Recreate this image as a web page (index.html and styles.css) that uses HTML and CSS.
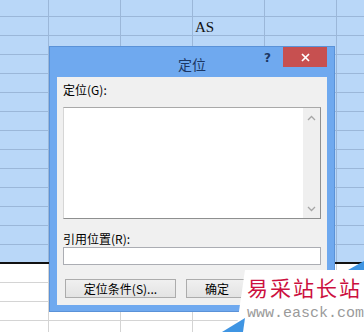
FILE: index.html
```html
<!DOCTYPE html>
<html lang="zh-CN">
  <head>
    <meta charset="UTF-8" />
    <meta name="viewport" content="width=device-width, initial-scale=1.0" />
    <title>定位</title>
    <link rel="stylesheet" href="styles.css">
  </head>
  <body>
    <div class="sheet">
      <div class="sheet-top">
        <div class="cell-row"><span class="cell-text">AS</span></div>
      </div>
      <div class="sheet-bottom"></div>

      <div class="dialog">
        <div class="titlebar">
          <span></span>
          <span class="title">定位</span>
          <div class="title-tools">
            <span class="help">?</span>
            <span class="close">
              <svg width="9" height="9" viewBox="0 0 9 9">
                <path d="M1 1L8 8M8 1L1 8" stroke="#fff" stroke-width="1.7" />
              </svg>
            </span>
          </div>
        </div>

        <div class="client">
          <div class="label">定位(<u>G</u>):</div>
          <div class="listbox">
            <div class="list-area"></div>
            <div class="scroll">
              <svg width="9" height="6" viewBox="0 0 9 6">
                <polyline points="1,5 4.5,1.5 8,5" fill="none" stroke="#a6a6a6" stroke-width="1.3" />
              </svg>
              <svg width="9" height="6" viewBox="0 0 9 6">
                <polyline points="1,1 4.5,4.5 8,1" fill="none" stroke="#a6a6a6" stroke-width="1.3" />
              </svg>
            </div>
          </div>
          <div class="label label-ref">引用位置(<u>R</u>):</div>
          <div class="textbox"></div>
          <div class="buttons">
            <button class="btn btn-wide">定位条件(<u>S</u>)...</button>
            <button class="btn">确定</button>
          </div>
        </div>
      </div>

      <div class="watermark">
        <svg class="watermark-bg" width="144" height="77" viewBox="0 0 144 77">
          <polygon points="25,15 144,15 144,77 16,77" fill="#fff" />
          <polygon points="128,15 144,6 144,15" fill="#3f95e3" />
          <polygon points="2,77 25,63 23,77" fill="#3f95e3" />
        </svg>
        <div class="wm-title">易采站长站</div>
        <div class="wm-url">www.easck.com</div>
      </div>
    </div>
  </body>
</html>
```

FILE: styles.css
```css
body {
  margin: 0;
  overflow: hidden;
  font-family: "Noto Sans CJK SC", sans-serif;
  font-size: 12px;
  color: #000;
}
.sheet {
  position: relative;
  width: 364px;
  height: 332px;
  overflow: hidden;
  background: #fff;
}
.sheet-top {
  height: 262px;
  background-color: #b9d7f8;
  background-image:
    linear-gradient(to right, transparent 71px, #9bb7d9 71px),
    linear-gradient(to bottom, transparent 18px, #9bb7d9 18px);
  background-size: 72px 100%, 100% 19px;
  background-position: 49px 0, 0 17px;
  overflow: hidden;
}
.cell-row {
  margin-top: 18px;
  padding-left: 195px;
  height: 16px;
}
.cell-text {
  font-family: "Liberation Serif", serif;
  font-size: 15px;
  line-height: 16px;
  color: #111;
}
.sheet-bottom {
  height: 68px;
  border-top: 2px solid #111;
  background-image:
    linear-gradient(to right, transparent 71px, #d4d4d4 71px),
    linear-gradient(to bottom, transparent 18px, #d4d4d4 18px);
  background-size: 72px 100%, 100% 19px;
  background-position: 49px 0, 0 0;
}

/* dialog */
.dialog {
  position: absolute;
  left: 49px;
  top: 46px;
  width: 286px;
  height: 266px;
  box-sizing: border-box;
  background: #6fa9ef;
  border: 1px solid #5a92d8;
  display: flex;
  flex-direction: column;
}
.titlebar {
  height: 30px;
  display: grid;
  grid-template-columns: 1fr auto 1fr;
}
.title {
  font-size: 14px;
  line-height: 14px;
  color: #1c3763;
  margin-top: 10px;
}
.title-tools {
  display: flex;
  justify-content: flex-end;
  align-items: flex-start;
  padding-right: 7px;
}
.help {
  font-family: "DejaVu Sans", sans-serif;
  font-weight: bold;
  font-size: 12px;
  line-height: 12px;
  color: #1c3763;
  margin-top: 5px;
  margin-right: 12px;
}
.close {
  width: 44px;
  height: 20px;
  background: #c75050;
  display: flex;
  align-items: center;
  justify-content: center;
}
.client {
  flex: 1;
  margin: 0 7px 6px;
  background: #f0f0f0;
  padding: 6px 6px 0;
}
.label {
  line-height: 14px;
  height: 14px;
}
u {
  text-decoration: none;
}
.listbox {
  margin-top: 10px;
  height: 112px;
  box-sizing: border-box;
  border: 1px solid #8e8f8f;
  border-top-color: #a9a9a9;
  border-left-color: #d6d6d6;
  background: #fff;
  display: flex;
}
.list-area {
  flex: 1;
}
.scroll {
  width: 17px;
  background: #efefef;
  display: flex;
  flex-direction: column;
  justify-content: space-between;
  align-items: center;
  padding: 7px 0 6px;
}
.label-ref {
  margin-top: 13px;
}
.textbox {
  margin-top: 1px;
  height: 18px;
  box-sizing: border-box;
  border: 1px solid #abadb3;
  background: #fff;
}
.buttons {
  display: flex;
  gap: 10px;
  margin-top: 14px;
  padding-left: 2px;
}
.btn {
  height: 19px;
  width: 62px;
  padding: 0;
  border: 1px solid #acacac;
  background: linear-gradient(#f0f0f0, #e3e3e3);
  font-family: "Noto Sans CJK SC", sans-serif;
  font-size: 12px;
  line-height: 16px;
  color: #000;
}
.btn-wide {
  width: 111px;
}

/* watermark */
.watermark {
  position: absolute;
  left: 220px;
  top: 255px;
  width: 144px;
  height: 77px;
}
.watermark-bg {
  position: absolute;
  left: 0;
  top: 0;
}
.wm-title {
  position: absolute;
  left: 27px;
  top: 19px;
  font-size: 21px;
  line-height: 26px;
  letter-spacing: 2px;
  color: #cc1040;
  white-space: nowrap;
}
.wm-url {
  position: absolute;
  left: 27px;
  top: 50px;
  font-family: "Liberation Mono", monospace;
  font-size: 15px;
  line-height: 18px;
  color: #9a9a9a;
  white-space: nowrap;
}
```
